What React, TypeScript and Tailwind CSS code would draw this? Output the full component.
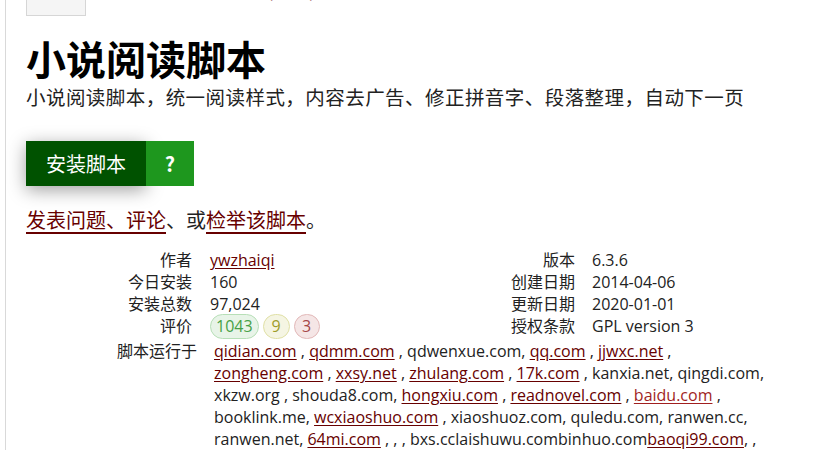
const font = "font-['Open_Sans','Noto_Sans_CJK_SC',sans-serif]";
const cjk = "font-['Noto_Sans_CJK_SC',sans-serif]";

type Site = { name: string; link?: boolean; red?: boolean; sep: string };

// one entry per rendered line, so the wrap points match the page
const appliesTo: Site[][] = [
  [
    { name: "qidian.com", link: true, sep: " , " },
    { name: "qdmm.com", link: true, sep: " , " },
    { name: "qdwenxue.com", sep: ", " },
    { name: "qq.com", link: true, sep: " , " },
    { name: "jjwxc.net", link: true, sep: " ," },
  ],
  [
    { name: "zongheng.com", link: true, sep: " , " },
    { name: "xxsy.net", link: true, sep: " , " },
    { name: "zhulang.com", link: true, sep: " , " },
    { name: "17k.com", link: true, sep: " , " },
    { name: "kanxia.net", sep: ", " },
    { name: "qingdi.com", sep: "," },
  ],
  [
    { name: "xkzw.org", sep: " , " },
    { name: "shouda8.com", sep: ", " },
    { name: "hongxiu.com", link: true, sep: " , " },
    { name: "readnovel.com", link: true, sep: " , " },
    { name: "baidu.com", link: true, red: true, sep: " ," },
  ],
  [
    { name: "booklink.me", sep: ", " },
    { name: "wcxiaoshuo.com", link: true, sep: " , " },
    { name: "xiaoshuoz.com", sep: ", " },
    { name: "quledu.com", sep: ", " },
    { name: "ranwen.cc", sep: "," },
  ],
  [
    { name: "ranwen.net", sep: ", " },
    { name: "64mi.com", link: true, sep: " , , , " },
    { name: "bxs.cclaishuwu.com", sep: "" },
    { name: "binhuo.com", sep: "" },
    { name: "baoqi99.com", link: true, sep: ", ," },
  ],
];

const Label = ({ children, right }: { children: React.ReactNode; right?: boolean }) => (
  <div className={`text-right ${right ? "pr-[17px]" : "pr-[18px]"}`}>{children}</div>
);

export default function App() {
  return (
    <div className={`h-[450px] overflow-hidden bg-white text-[#222] ${font}`}>
      <div className="ml-[5px] flex h-[450px] flex-col border-l border-[#d9d9d9] pl-[20px]">
        {/* tabs, mostly scrolled off the top */}
        <div className="-mt-[15px] flex h-[31px] items-start text-[16px] leading-[14px] text-[#670000]">
          <div className="flex h-[31px] w-[60px] justify-center border border-t-0 border-[#d6d6d6] bg-[#f5f5f5] text-[#222]">
            信息
          </div>
          <span className="ml-[14px]">代码</span>
          <span className="ml-[18px]">历史版本</span>
          <span className="ml-[18px]">反馈 (1224)</span>
          <span className="ml-[34px]">统计</span>
        </div>

        <h2 className={`mt-[18px] text-[40px] font-bold leading-[48px] text-black ${cjk}`}>小说阅读脚本</h2>
        <p className={`mt-[1px] whitespace-nowrap text-[19.5px] leading-[28px] tracking-[0.45px] ${cjk}`}>
          小说阅读脚本，统一阅读样式，内容去广告、修正拼音字、段落整理，自动下一页
        </p>

        <div className={`mt-[30px] flex h-[47px] text-[20px] text-white ${cjk}`}>
          <a className="flex items-center bg-[#005200] px-[20px] shadow-[0_4px_18px_rgba(0,0,0,0.38)]">安装脚本</a>
          <a className="relative z-10 flex w-[48px] items-center justify-center bg-[#1e971e] font-bold">?</a>
        </div>

        <p className={`mt-[20px] text-[20px] leading-[28px] ${cjk}`}>
          <a className="text-[#670000] underline underline-offset-[4px]">发表问题、评论</a>、或
          <a className="text-[#670000] underline underline-offset-[4px]">检举该脚本</a>。
        </p>

        <div className="mt-[15px] grid grid-cols-[184px_301px_81px_1fr] text-[16px] leading-[22px]">
          <Label>作者</Label>
          <div>
            <a className="text-[#670000] underline underline-offset-[2px]">ywzhaiqi</a>
          </div>
          <Label right>版本</Label>
          <div>6.3.6</div>

          <Label>今日安装</Label>
          <div>160</div>
          <Label right>创建日期</Label>
          <div>2014-04-06</div>

          <Label>安装总数</Label>
          <div>97,024</div>
          <Label right>更新日期</Label>
          <div>2020-01-01</div>

          <Label>评价</Label>
          <div className="flex h-[22px] items-center gap-[4px]">
            <span className="flex h-[25px] min-w-[26px] items-center justify-center rounded-full border border-[#b7dfb7] bg-[#e8f4e8] px-[5px] text-[#46a046]">
              1043
            </span>
            <span className="flex h-[25px] min-w-[27px] items-center justify-center rounded-full border border-[#e0e0a6] bg-[#f5f5e3] px-[5px] text-[#9d9d2b]">
              9
            </span>
            <span className="flex h-[25px] min-w-[26px] items-center justify-center rounded-full border border-[#e2b8b8] bg-[#f5e6e6] px-[5px] text-[#a54646]">
              3
            </span>
          </div>
          <Label right>授权条款</Label>
          <div>GPL version 3</div>
        </div>

        <div className="mt-[3px] flex text-[16px] leading-[22px]">
          <div className="w-[184px] shrink-0 pr-[13px] text-right">脚本运行于</div>
          <div className="pl-[4px]">
            {appliesTo.map((line, i) => (
              <div key={i} className="whitespace-pre">
                {line.map((s) => (
                  <span key={s.name}>
                    {s.link ? (
                      <a
                        className={`underline underline-offset-[2px] ${
                          s.red ? "text-[#a11f1f]" : "text-[#670000]"
                        }`}
                      >
                        {s.name}
                      </a>
                    ) : (
                      s.name
                    )}
                    {s.sep}
                  </span>
                ))}
              </div>
            ))}
          </div>
        </div>
      </div>
    </div>
  );
}
